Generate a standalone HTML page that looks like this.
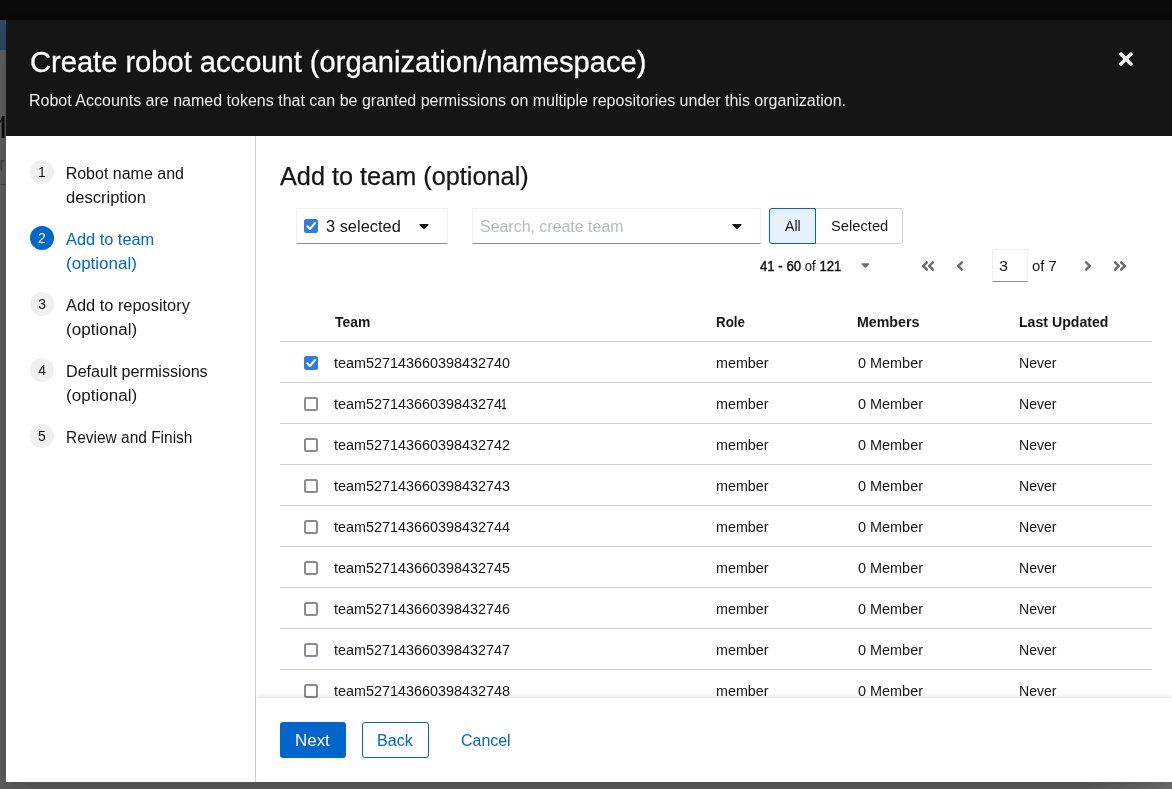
<!DOCTYPE html>
<html lang="en">
<head>
<meta charset="utf-8">
<title>Create robot account</title>
<style>
*{box-sizing:border-box;margin:0;padding:0}
html,body{width:1172px;height:789px;overflow:hidden}
body{position:relative;background:#5f5f5f;font-family:"Liberation Sans",sans-serif;color:#151515;font-size:16px}
#wrap{position:absolute;left:0;top:0;width:1172px;height:789px;overflow:hidden;will-change:transform}
.a{position:absolute}
.t{position:absolute;white-space:nowrap;line-height:1;transform-origin:0 0;z-index:1}
.circ{width:24px;height:24px;border-radius:50%}
.ibox{background:#fff;border:1px solid #f0f0f0;border-bottom:1px solid #8a8d90}
.hl{left:280px;width:872px;height:1px;background:#d2d2d2}
.cb{width:14px;height:14px;border-radius:2.5px;border:2px solid #8a8a9b;background:#fff}
.cb.on{border:none;background:#307ce0}
.cb.on svg{position:absolute;left:0;top:0}
#bnext,#bback,#bcancel{z-index:4}
b.md{font-weight:normal;-webkit-text-stroke:0.45px #151515}
.one{display:inline-block;transform:scaleX(.62);transform-origin:0 0;margin-left:-0.3px;-webkit-text-stroke:0.35px #151515}
</style>
</head>
<body>
<div id="wrap">
<div class="a" style="left:0;top:0;width:1172px;height:20px;background:#0a0a0a"></div>
<div class="a" style="left:0;top:20px;width:6px;height:30px;background:#2c4a66"></div>
<div class="a" style="left:0;top:50px;width:1172px;height:739px;background:#606060"></div>
<svg class="a" style="left:0;top:114px" width="6" height="26" viewBox="0 0 6 26"><path d="M0 7.2 L2.3 2 L4.6 2 L4.6 24 L1.6 24 L1.6 6.2 L0 9.6 Z" fill="#0c0c0c"/></svg>
<svg class="a" style="left:0;top:158px" width="6" height="14" viewBox="0 0 6 14"><path d="M1.4 2 L1.4 12.6 M1.4 5.5 Q2 2.6 4.4 2.6" stroke="#3e3e3e" stroke-width="1.3" fill="none"/></svg>
<div class="a" style="left:0;top:184px;width:6px;height:1px;background:#4c4c4c"></div>
<div id="modal" class="a" style="left:6px;top:20px;width:1172px;height:762px;background:#fff;box-shadow:0 16px 32px 0 rgba(3,3,3,.16),0 0 8px 0 rgba(3,3,3,.1)"></div>
<div class="a" style="left:1090px;top:782px;width:82px;height:7px;background:linear-gradient(90deg,rgba(255,255,255,0),rgba(255,255,255,.1))"></div>
<div id="hdr" class="a" style="left:6px;top:20px;width:1166px;height:116px;background:#151515"></div>
<svg class="a" style="left:1119.12px;top:49.00px;z-index:1" width="13.750" height="20" viewBox="0 0 352 512"><path d="M242.72 256l100.07-100.07c12.28-12.28 12.28-32.19 0-44.48l-22.24-22.24c-12.28-12.28-32.19-12.28-44.48 0L176 189.28 75.93 89.21c-12.28-12.28-32.19-12.28-44.48 0L9.21 111.45c-12.28 12.28-12.28 32.19 0 44.48L109.28 256 9.21 356.07c-12.28 12.28-12.28 32.19 0 44.48l22.24 22.24c12.28 12.28 32.2 12.28 44.48 0L176 322.72l100.07 100.07c12.28 12.28 32.2 12.28 44.48 0l22.24-22.24c12.28-12.28 12.28-32.19 0-44.48L242.72 256z" fill="#f0f0f0"/></svg>
<div id="navb" class="a" style="left:255px;top:136px;width:1px;height:646px;background:#d2d2d2"></div>
<div class="a circ" style="left:30px;top:160px;background:#f0f0f0"></div>
<div class="a circ" style="left:30px;top:226px;background:#06c"></div>
<div class="a circ" style="left:30px;top:292px;background:#f0f0f0"></div>
<div class="a circ" style="left:30px;top:358px;background:#f0f0f0"></div>
<div class="a circ" style="left:30px;top:424px;background:#f0f0f0"></div>
<div class="a ibox" style="left:296px;top:208px;width:152px;height:36px"></div>
<div class="a cb on" style="left:304px;top:219px"><svg width="14" height="14" viewBox="0 0 14 14"><path d="M3.4 7.3 L5.9 10 L11 4.1" stroke="#fff" stroke-width="2" fill="none" stroke-linecap="round" stroke-linejoin="round"/></svg></div>
<svg class="a" style="left:419.15px;top:217.90px;z-index:1" width="10.000" height="16" viewBox="0 0 320 512"><path d="M31.3 192h257.3c17.8 0 26.7 21.5 14.1 34.1L174.1 354.8c-7.8 7.8-20.5 7.8-28.3 0L17.2 226.1C4.6 213.5 13.5 192 31.3 192z" fill="#151515"/></svg>
<div class="a ibox" style="left:472px;top:208px;width:289px;height:36px"></div>
<svg class="a" style="left:732.10px;top:217.90px;z-index:1" width="10.000" height="16" viewBox="0 0 320 512"><path d="M31.3 192h257.3c17.8 0 26.7 21.5 14.1 34.1L174.1 354.8c-7.8 7.8-20.5 7.8-28.3 0L17.2 226.1C4.6 213.5 13.5 192 31.3 192z" fill="#151515"/></svg>
<div class="a" style="left:815px;top:208px;width:88px;height:36px;border:1px solid #d2d2d2;border-left:none;border-radius:0 3px 3px 0;background:#fff"></div>
<div class="a" style="left:769px;top:208px;width:47px;height:36px;border:1px solid #06c;border-radius:3px 0 0 3px;background:#e7f1fa"></div>
<svg class="a" style="left:860.58px;top:257.95px;z-index:1" width="8.750" height="14" viewBox="0 0 320 512"><path d="M31.3 192h257.3c17.8 0 26.7 21.5 14.1 34.1L174.1 354.8c-7.8 7.8-20.5 7.8-28.3 0L17.2 226.1C4.6 213.5 13.5 192 31.3 192z" fill="#6a6e73"/></svg>
<svg class="a" style="left:920.90px;top:258.20px;z-index:1" width="14.000" height="16" viewBox="0 0 448 512"><path d="M223.7 239l136-136c9.4-9.4 24.6-9.4 33.9 0l22.6 22.6c9.4 9.4 9.4 24.6 0 33.9L319.9 256l96.4 96.4c9.4 9.4 9.4 24.6 0 33.9L393.7 409c-9.4 9.4-24.6 9.4-33.9 0l-136-136c-9.5-9.4-9.5-24.6-.1-34zm-192 34l136 136c9.4 9.4 24.6 9.4 33.9 0l22.6-22.6c9.4-9.4 9.4-24.6 0-33.9L127.9 256l96.4-96.4c9.4-9.4 9.4-24.6 0-33.9L201.7 103c-9.4-9.4-24.6-9.4-33.9 0l-136 136c-9.5 9.4-9.5 24.6-.1 34z" fill="#6a6e73"/></svg>
<svg class="a" style="left:956.20px;top:258.20px;z-index:1" width="8.000" height="16" viewBox="0 0 256 512"><path d="M31.7 239l136-136c9.4-9.4 24.6-9.4 33.9 0l22.6 22.6c9.4 9.4 9.4 24.6 0 33.9L127.9 256l96.4 96.4c9.4 9.4 9.4 24.6 0 33.9L201.7 409c-9.4 9.4-24.6 9.4-33.9 0l-136-136c-9.5-9.4-9.5-24.6-.1-34z" fill="#6a6e73"/></svg>
<div class="a ibox" style="left:992px;top:249px;width:36px;height:33px"></div>
<svg class="a" style="left:1083.80px;top:258.20px;z-index:1" width="8.000" height="16" viewBox="0 0 256 512"><path d="M224.3 273l-136 136c-9.4 9.4-24.6 9.4-33.9 0l-22.6-22.6c-9.4-9.4-9.4-24.6 0-33.9l96.4-96.4-96.4-96.4c-9.4-9.4-9.4-24.6 0-33.9L54.3 103c9.4-9.4 24.6-9.4 33.9 0l136 136c9.5 9.4 9.5 24.6.1 34z" fill="#6a6e73"/></svg>
<svg class="a" style="left:1112.70px;top:258.20px;z-index:1" width="14.000" height="16" viewBox="0 0 448 512"><path d="M224.3 273l-136 136c-9.4 9.4-24.6 9.4-33.9 0l-22.6-22.6c-9.4-9.4-9.4-24.6 0-33.9l96.4-96.4-96.4-96.4c-9.4-9.4-9.4-24.6 0-33.9L54.3 103c9.4-9.4 24.6-9.4 33.9 0l136 136c9.5 9.4 9.5 24.6.1 34zm192-34l-136-136c-9.4-9.4-24.6-9.4-33.9 0l-22.6 22.6c-9.4 9.4-9.4 24.6 0 33.9l96.4 96.4-96.4 96.4c-9.4 9.4-9.4 24.6 0 33.9l22.6 22.6c9.4 9.4 24.6 9.4 33.9 0l136-136c9.4-9.2 9.4-24.4 0-33.8z" fill="#6a6e73"/></svg>
<div class="a hl" style="top:341px"></div>
<div class="a hl" style="top:382px"></div>
<div class="a hl" style="top:423px"></div>
<div class="a hl" style="top:464px"></div>
<div class="a hl" style="top:505px"></div>
<div class="a hl" style="top:546px"></div>
<div class="a hl" style="top:587px"></div>
<div class="a hl" style="top:628px"></div>
<div class="a hl" style="top:669px"></div>
<div class="a cb on" style="left:304px;top:356px"><svg width="14" height="14" viewBox="0 0 14 14"><path d="M3.4 7.3 L5.9 10 L11 4.1" stroke="#fff" stroke-width="2" fill="none" stroke-linecap="round" stroke-linejoin="round"/></svg></div>
<div class="a cb" style="left:304px;top:397px"></div>
<div class="a cb" style="left:304px;top:438px"></div>
<div class="a cb" style="left:304px;top:479px"></div>
<div class="a cb" style="left:304px;top:520px"></div>
<div class="a cb" style="left:304px;top:561px"></div>
<div class="a cb" style="left:304px;top:602px"></div>
<div class="a cb" style="left:304px;top:643px"></div>
<div class="a cb" style="left:304px;top:684px"></div>
<div id="footer" class="a" style="left:256px;top:698px;width:916px;height:84px;background:#fff;box-shadow:0 -2px 4px -1px rgba(3,3,3,.16);z-index:2"></div>
<div class="a" style="left:280px;top:722px;width:66px;height:36px;border-radius:3px;background:#06c;z-index:3"></div>
<div class="a" style="left:362px;top:722px;width:67px;height:36px;border-radius:3px;border:1px solid #06c;background:#fff;z-index:3"></div>
<div id="title" class="t" style="left:29.59px;top:48.00px;font-size:29px;color:#fff;transform:scaleX(1.0035);-webkit-text-stroke:0.3px #fff;">Create robot account (organization/namespace)</div>
<div id="desc" class="t" style="left:29.24px;top:93.00px;font-size:16px;color:#fff;transform:scaleX(1.0007);color:#ededed;">Robot Accounts are named tokens that can be granted permissions on multiple repositories under this organization.</div>
<div id="n1a" class="t" style="left:65.66px;top:166.00px;font-size:16px;color:#151515;">Robot name and</div>
<div id="n1b" class="t" style="left:65.92px;top:190.00px;font-size:16px;color:#151515;transform:scaleX(1.0341);">description</div>
<div id="n2a" class="t" style="left:66.23px;top:232.00px;font-size:16px;color:#06c;transform:scaleX(1.0223);">Add to team</div>
<div id="n2b" class="t" style="left:65.75px;top:256.00px;font-size:16px;color:#06c;transform:scaleX(1.0639);">(optional)</div>
<div id="n3a" class="t" style="left:66.24px;top:298.00px;font-size:16px;color:#151515;transform:scaleX(1.0239);">Add to repository</div>
<div id="n3b" class="t" style="left:65.74px;top:322.00px;font-size:16px;color:#151515;transform:scaleX(1.0663);">(optional)</div>
<div id="n4a" class="t" style="left:65.61px;top:364.00px;font-size:16px;color:#151515;transform:scaleX(1.0084);">Default permissions</div>
<div id="n4b" class="t" style="left:65.74px;top:388.00px;font-size:16px;color:#151515;transform:scaleX(1.0663);">(optional)</div>
<div id="n5a" class="t" style="left:65.83px;top:430.00px;font-size:16px;color:#151515;transform:scaleX(0.9671);">Review and Finish</div>
<div id="h2" class="t" style="left:280.42px;top:164.00px;font-size:25.5px;color:#151515;transform:scaleX(0.9911);-webkit-text-stroke:0.25px #151515;">Add to team (optional)</div>
<div id="sel3" class="t" style="left:325.57px;top:219.00px;font-size:16px;color:#151515;transform:scaleX(1.0248);">3 selected</div>
<div id="ph" class="t" style="left:479.99px;top:219.00px;font-size:16px;color:#b8bbbe;transform:scaleX(0.9962);">Search, create team</div>
<div id="tgall" class="t" style="left:784.80px;top:219.00px;font-size:14px;color:#151515;transform:scaleX(1.0094);">All</div>
<div id="tgsel" class="t" style="left:830.57px;top:219.00px;font-size:14px;color:#151515;transform:scaleX(1.0520);">Selected</div>
<div id="pgtxt" class="t" style="left:759.75px;top:259.00px;font-size:14px;color:#151515;transform:scaleX(0.9422);"><b class="md">41 - 60</b> of <b class="md">121</b></div>
<div id="pg3" class="t" style="left:998.76px;top:259.00px;font-size:14px;color:#151515;transform:scaleX(1.1520);">3</div>
<div id="pgof" class="t" style="left:1031.72px;top:259.00px;font-size:14px;color:#151515;transform:scaleX(1.0590);">of 7</div>
<div id="thteam" class="t" style="left:334.63px;top:315.00px;font-size:14px;color:#151515;font-weight:bold;transform:scaleX(0.9913);">Team</div>
<div id="throle" class="t" style="left:716.10px;top:315.00px;font-size:14px;color:#151515;font-weight:bold;transform:scaleX(0.9574);">Role</div>
<div id="thmem" class="t" style="left:857.15px;top:315.00px;font-size:14px;color:#151515;font-weight:bold;transform:scaleX(1.0144);">Members</div>
<div id="thlu" class="t" style="left:1018.56px;top:315.00px;font-size:14px;color:#151515;font-weight:bold;transform:scaleX(1.0082);">Last Updated</div>
<div id="bnext" class="t" style="left:295.15px;top:733.00px;font-size:16px;color:#fff;transform:scaleX(1.0587);">Next</div>
<div id="bback" class="t" style="left:377.44px;top:733.00px;font-size:16px;color:#06c;transform:scaleX(1.0049);">Back</div>
<div id="bcancel" class="t" style="left:461.06px;top:733.00px;font-size:16px;color:#06c;transform:scaleX(0.9965);">Cancel</div>
<div id="cd1" class="t" style="left:37.91px;top:165.00px;font-size:14px;color:#151515;">1</div>
<div id="cd2" class="t" style="left:38.08px;top:231.00px;font-size:14px;color:#fff;">2</div>
<div id="cd3" class="t" style="left:38.13px;top:297.00px;font-size:14px;color:#151515;">3</div>
<div id="cd4" class="t" style="left:38.26px;top:363.00px;font-size:14px;color:#151515;">4</div>
<div id="cd5" class="t" style="left:37.98px;top:429.00px;font-size:14px;color:#151515;">5</div>
<div id="r0c1" class="t" style="left:334.18px;top:356.00px;font-size:14px;color:#151515;transform:scaleX(1.0283);">team527143660398432740</div>
<div id="r0c2" class="t" style="left:715.92px;top:356.00px;font-size:14px;color:#151515;transform:scaleX(1.0223);">member</div>
<div id="r0c3" class="t" style="left:857.62px;top:356.00px;font-size:14px;color:#151515;transform:scaleX(1.0312);">0 Member</div>
<div id="r0c4" class="t" style="left:1018.85px;top:356.00px;font-size:14px;color:#151515;transform:scaleX(1.0022);">Never</div>
<div id="r1c1" class="t" style="left:334.18px;top:397.00px;font-size:14px;color:#151515;transform:scaleX(1.0283);">team52714366039843274<span class="one">1</span></div>
<div id="r1c2" class="t" style="left:715.92px;top:397.00px;font-size:14px;color:#151515;transform:scaleX(1.0223);">member</div>
<div id="r1c3" class="t" style="left:857.62px;top:397.00px;font-size:14px;color:#151515;transform:scaleX(1.0312);">0 Member</div>
<div id="r1c4" class="t" style="left:1018.85px;top:397.00px;font-size:14px;color:#151515;transform:scaleX(1.0022);">Never</div>
<div id="r2c1" class="t" style="left:334.18px;top:438.00px;font-size:14px;color:#151515;transform:scaleX(1.0283);">team527143660398432742</div>
<div id="r2c2" class="t" style="left:715.92px;top:438.00px;font-size:14px;color:#151515;transform:scaleX(1.0223);">member</div>
<div id="r2c3" class="t" style="left:857.62px;top:438.00px;font-size:14px;color:#151515;transform:scaleX(1.0312);">0 Member</div>
<div id="r2c4" class="t" style="left:1018.85px;top:438.00px;font-size:14px;color:#151515;transform:scaleX(1.0022);">Never</div>
<div id="r3c1" class="t" style="left:334.18px;top:479.00px;font-size:14px;color:#151515;transform:scaleX(1.0283);">team527143660398432743</div>
<div id="r3c2" class="t" style="left:715.92px;top:479.00px;font-size:14px;color:#151515;transform:scaleX(1.0223);">member</div>
<div id="r3c3" class="t" style="left:857.62px;top:479.00px;font-size:14px;color:#151515;transform:scaleX(1.0312);">0 Member</div>
<div id="r3c4" class="t" style="left:1018.85px;top:479.00px;font-size:14px;color:#151515;transform:scaleX(1.0022);">Never</div>
<div id="r4c1" class="t" style="left:334.18px;top:520.00px;font-size:14px;color:#151515;transform:scaleX(1.0283);">team527143660398432744</div>
<div id="r4c2" class="t" style="left:715.92px;top:520.00px;font-size:14px;color:#151515;transform:scaleX(1.0223);">member</div>
<div id="r4c3" class="t" style="left:857.62px;top:520.00px;font-size:14px;color:#151515;transform:scaleX(1.0312);">0 Member</div>
<div id="r4c4" class="t" style="left:1018.85px;top:520.00px;font-size:14px;color:#151515;transform:scaleX(1.0022);">Never</div>
<div id="r5c1" class="t" style="left:334.18px;top:561.00px;font-size:14px;color:#151515;transform:scaleX(1.0283);">team527143660398432745</div>
<div id="r5c2" class="t" style="left:715.92px;top:561.00px;font-size:14px;color:#151515;transform:scaleX(1.0223);">member</div>
<div id="r5c3" class="t" style="left:857.62px;top:561.00px;font-size:14px;color:#151515;transform:scaleX(1.0312);">0 Member</div>
<div id="r5c4" class="t" style="left:1018.85px;top:561.00px;font-size:14px;color:#151515;transform:scaleX(1.0022);">Never</div>
<div id="r6c1" class="t" style="left:334.18px;top:602.00px;font-size:14px;color:#151515;transform:scaleX(1.0283);">team527143660398432746</div>
<div id="r6c2" class="t" style="left:715.92px;top:602.00px;font-size:14px;color:#151515;transform:scaleX(1.0223);">member</div>
<div id="r6c3" class="t" style="left:857.62px;top:602.00px;font-size:14px;color:#151515;transform:scaleX(1.0312);">0 Member</div>
<div id="r6c4" class="t" style="left:1018.85px;top:602.00px;font-size:14px;color:#151515;transform:scaleX(1.0022);">Never</div>
<div id="r7c1" class="t" style="left:334.18px;top:643.00px;font-size:14px;color:#151515;transform:scaleX(1.0283);">team527143660398432747</div>
<div id="r7c2" class="t" style="left:715.92px;top:643.00px;font-size:14px;color:#151515;transform:scaleX(1.0223);">member</div>
<div id="r7c3" class="t" style="left:857.62px;top:643.00px;font-size:14px;color:#151515;transform:scaleX(1.0312);">0 Member</div>
<div id="r7c4" class="t" style="left:1018.85px;top:643.00px;font-size:14px;color:#151515;transform:scaleX(1.0022);">Never</div>
<div id="r8c1" class="t" style="left:334.18px;top:684.00px;font-size:14px;color:#151515;transform:scaleX(1.0283);">team527143660398432748</div>
<div id="r8c2" class="t" style="left:715.92px;top:684.00px;font-size:14px;color:#151515;transform:scaleX(1.0223);">member</div>
<div id="r8c3" class="t" style="left:857.62px;top:684.00px;font-size:14px;color:#151515;transform:scaleX(1.0312);">0 Member</div>
<div id="r8c4" class="t" style="left:1018.85px;top:684.00px;font-size:14px;color:#151515;transform:scaleX(1.0022);">Never</div>
</div>
</body>
</html>
